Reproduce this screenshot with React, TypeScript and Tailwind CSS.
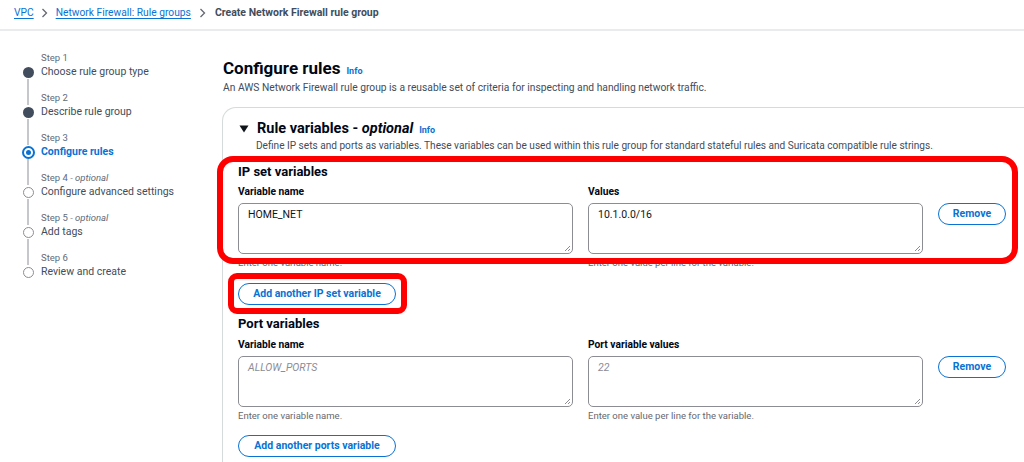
import React from "react";

const F = { fontFamily: 'Roboto, "Noto Sans", sans-serif' };

function Step({ label, optional, title, state, first, last }: { label: string; optional?: boolean; title: string; state: "done" | "current" | "todo"; first?: boolean; last?: boolean }) {
  return (
    <div className="flex">
      <div className="w-[41px] flex flex-col items-center pl-[15px]">
        <div className={`h-[14px] w-[2px] ${first ? "" : "bg-[#c6c6cd]"}`} />
        <div className="h-[14px] flex items-center justify-center">
          {state === "done" && <div className="w-[11px] h-[11px] rounded-full bg-[#414d5c]" />}
          {state === "current" && (
            <div className="w-[13px] h-[13px] rounded-full border-[2px] border-[#0972d3] flex items-center justify-center">
              <div className="w-[5px] h-[5px] rounded-full bg-[#0972d3]" />
            </div>
          )}
          {state === "todo" && <div className="w-[11px] h-[11px] rounded-full border border-[#8c8c94] bg-white" />}
        </div>
        <div className={`h-[12px] w-[2px] ${last ? "" : "bg-[#c6c6cd]"}`} />
      </div>
      <div className="flex flex-col">
        <div className="h-[14px] text-[9.5px] leading-[14px] text-[#5f6b7a]">
          {label}
          {optional && <span className="italic"> - optional</span>}
        </div>
        <div className={`h-[14px] text-[10.5px] leading-[14px] whitespace-nowrap ${state === "current" ? "font-bold text-[#0972d3]" : "text-[#414d5c]"}`}>{title}</div>
      </div>
    </div>
  );
}

function Field({ label, value, placeholder, hint }: { label: string; value?: string; placeholder?: string; hint: string }) {
  return (
    <div className="w-[335px] flex flex-col">
      <div className="text-[10.25px] leading-[14px] font-bold text-[#000716] mb-[4px]">{label}</div>
      <div className="relative h-[51px] rounded-[5px] border border-[#8c8c94] px-[9px] pt-[3px] text-[10.5px] leading-[16px]">
        {value ? <span className="text-[#0f141a]">{value}</span> : <span className="italic text-[#8c8c94]">{placeholder}</span>}
        <svg className="absolute right-[1px] bottom-[1px]" width="7" height="7" viewBox="0 0 7 7">
          <path d="M6 1 L1 6 M6 4 L4 6" stroke="#8c8c94" strokeWidth="1" />
        </svg>
      </div>
      <div className="mt-[2px] text-[9.5px] leading-[14px] text-[#656871]">{hint}</div>
    </div>
  );
}

function PillButton({ children, w }: { children: React.ReactNode; w?: string }) {
  return (
    <div className={`h-[22px] ${w ?? ""} rounded-full border-[1.5px] border-[#0972d3] flex items-center justify-center px-[12px] text-[10.5px] font-bold text-[#0972d3] whitespace-nowrap`}>
      {children}
    </div>
  );
}

export default function App() {
  return (
    <div className="relative w-[1024px] h-[462px] overflow-hidden bg-white text-[#0f141a]" style={F}>
      <div className="h-[31px] border-b-[2px] border-[#e9ebed] flex items-center pl-[14px] pb-[3px] text-[10.25px] whitespace-nowrap">
        <span className="text-[#0972d3] underline underline-offset-2">VPC</span>
        <svg className="ml-[7px] mr-[8px]" width="7" height="10" viewBox="0 0 7 10"><path d="M1.5 1 L5.5 5 L1.5 9" stroke="#656871" strokeWidth="1.3" fill="none" /></svg>
        <span className="text-[#0972d3] underline underline-offset-2">Network Firewall: Rule groups</span>
        <svg className="ml-[8px] mr-[9px]" width="7" height="10" viewBox="0 0 7 10"><path d="M1.5 1 L5.5 5 L1.5 9" stroke="#656871" strokeWidth="1.3" fill="none" /></svg>
        <span className="font-bold text-[#414d5c] text-[10.5px]">Create Network Firewall rule group</span>
      </div>

      <div className="flex">
        <div className="w-[222px] pt-[20px] flex flex-col">
          <Step label="Step 1" title="Choose rule group type" state="done" first />
          <Step label="Step 2" title="Describe rule group" state="done" />
          <Step label="Step 3" title="Configure rules" state="current" />
          <Step label="Step 4" optional title="Configure advanced settings" state="todo" />
          <Step label="Step 5" optional title="Add tags" state="todo" />
          <Step label="Step 6" title="Review and create" state="todo" last />
        </div>

        <div className="flex-1 pt-[26px] flex flex-col">
          <div className="pl-[1px] flex items-baseline gap-[6px]">
            <span className="text-[17px] leading-[23px] font-bold text-[#000716]">Configure rules</span>
            <span className="text-[9px] font-bold text-[#0972d3]">Info</span>
          </div>
          <div className="pl-[1px] text-[10.25px] leading-[16px] text-[#414d5c]">An AWS Network Firewall rule group is a reusable set of criteria for inspecting and handling network traffic.</div>

          <div className="mt-[11px] border-t border-l border-[#d5dbdb] rounded-tl-[14px] pl-[15px] pt-[11px] h-[400px]">
            <div className="flex items-center">
              <svg width="10" height="8" viewBox="0 0 10 8" className="ml-[1px] mr-[8px]"><path d="M0.5 0.5 H9.5 L5 7.5 Z" fill="#0f141a" /></svg>
              <span className="text-[14.5px] leading-[20px] font-bold text-[#000716]">Rule variables - <span className="italic">optional</span></span>
              <span className="ml-[6px] text-[9px] font-bold text-[#0972d3] mt-[3px]">Info</span>
            </div>
            <div className="pl-[18px] text-[10.1px] leading-[14px] text-[#414d5c] whitespace-nowrap">Define IP sets and ports as variables. These variables can be used within this rule group for standard stateful rules and Suricata compatible rule strings.</div>

            <div className="mt-[10px] text-[13px] leading-[18px] font-bold text-[#000716]">IP set variables</div>
            <div className="mt-[4px] flex gap-[15px]">
              <Field label="Variable name" value="HOME_NET" hint="Enter one variable name." />
              <Field label="Values" value="10.1.0.0/16" hint="Enter one value per line for the variable." />
              <div className="pt-[18px]"><PillButton w="w-[68px]">Remove</PillButton></div>
            </div>
            <div className="mt-[13px] flex"><PillButton w="w-[158px]">Add another IP set variable</PillButton></div>

            <div className="mt-[10px] text-[13px] leading-[18px] font-bold text-[#000716]">Port variables</div>
            <div className="mt-[5px] flex gap-[15px]">
              <Field label="Variable name" placeholder="ALLOW_PORTS" hint="Enter one variable name." />
              <Field label="Port variable values" placeholder="22" hint="Enter one value per line for the variable." />
              <div className="pt-[18px]"><PillButton w="w-[68px]">Remove</PillButton></div>
            </div>
            <div className="mt-[12px] flex"><PillButton w="w-[158px]">Add another ports variable</PillButton></div>
          </div>
        </div>
      </div>

      <div className="absolute left-[217px] top-[156px] w-[801px] h-[108px] border-[6px] border-[#ff0000] rounded-[16px] pointer-events-none" />
      <div className="absolute left-[228px] top-[273px] w-[179px] h-[41px] border-[6px] border-[#ff0000] rounded-[9px] pointer-events-none" />
    </div>
  );
}
